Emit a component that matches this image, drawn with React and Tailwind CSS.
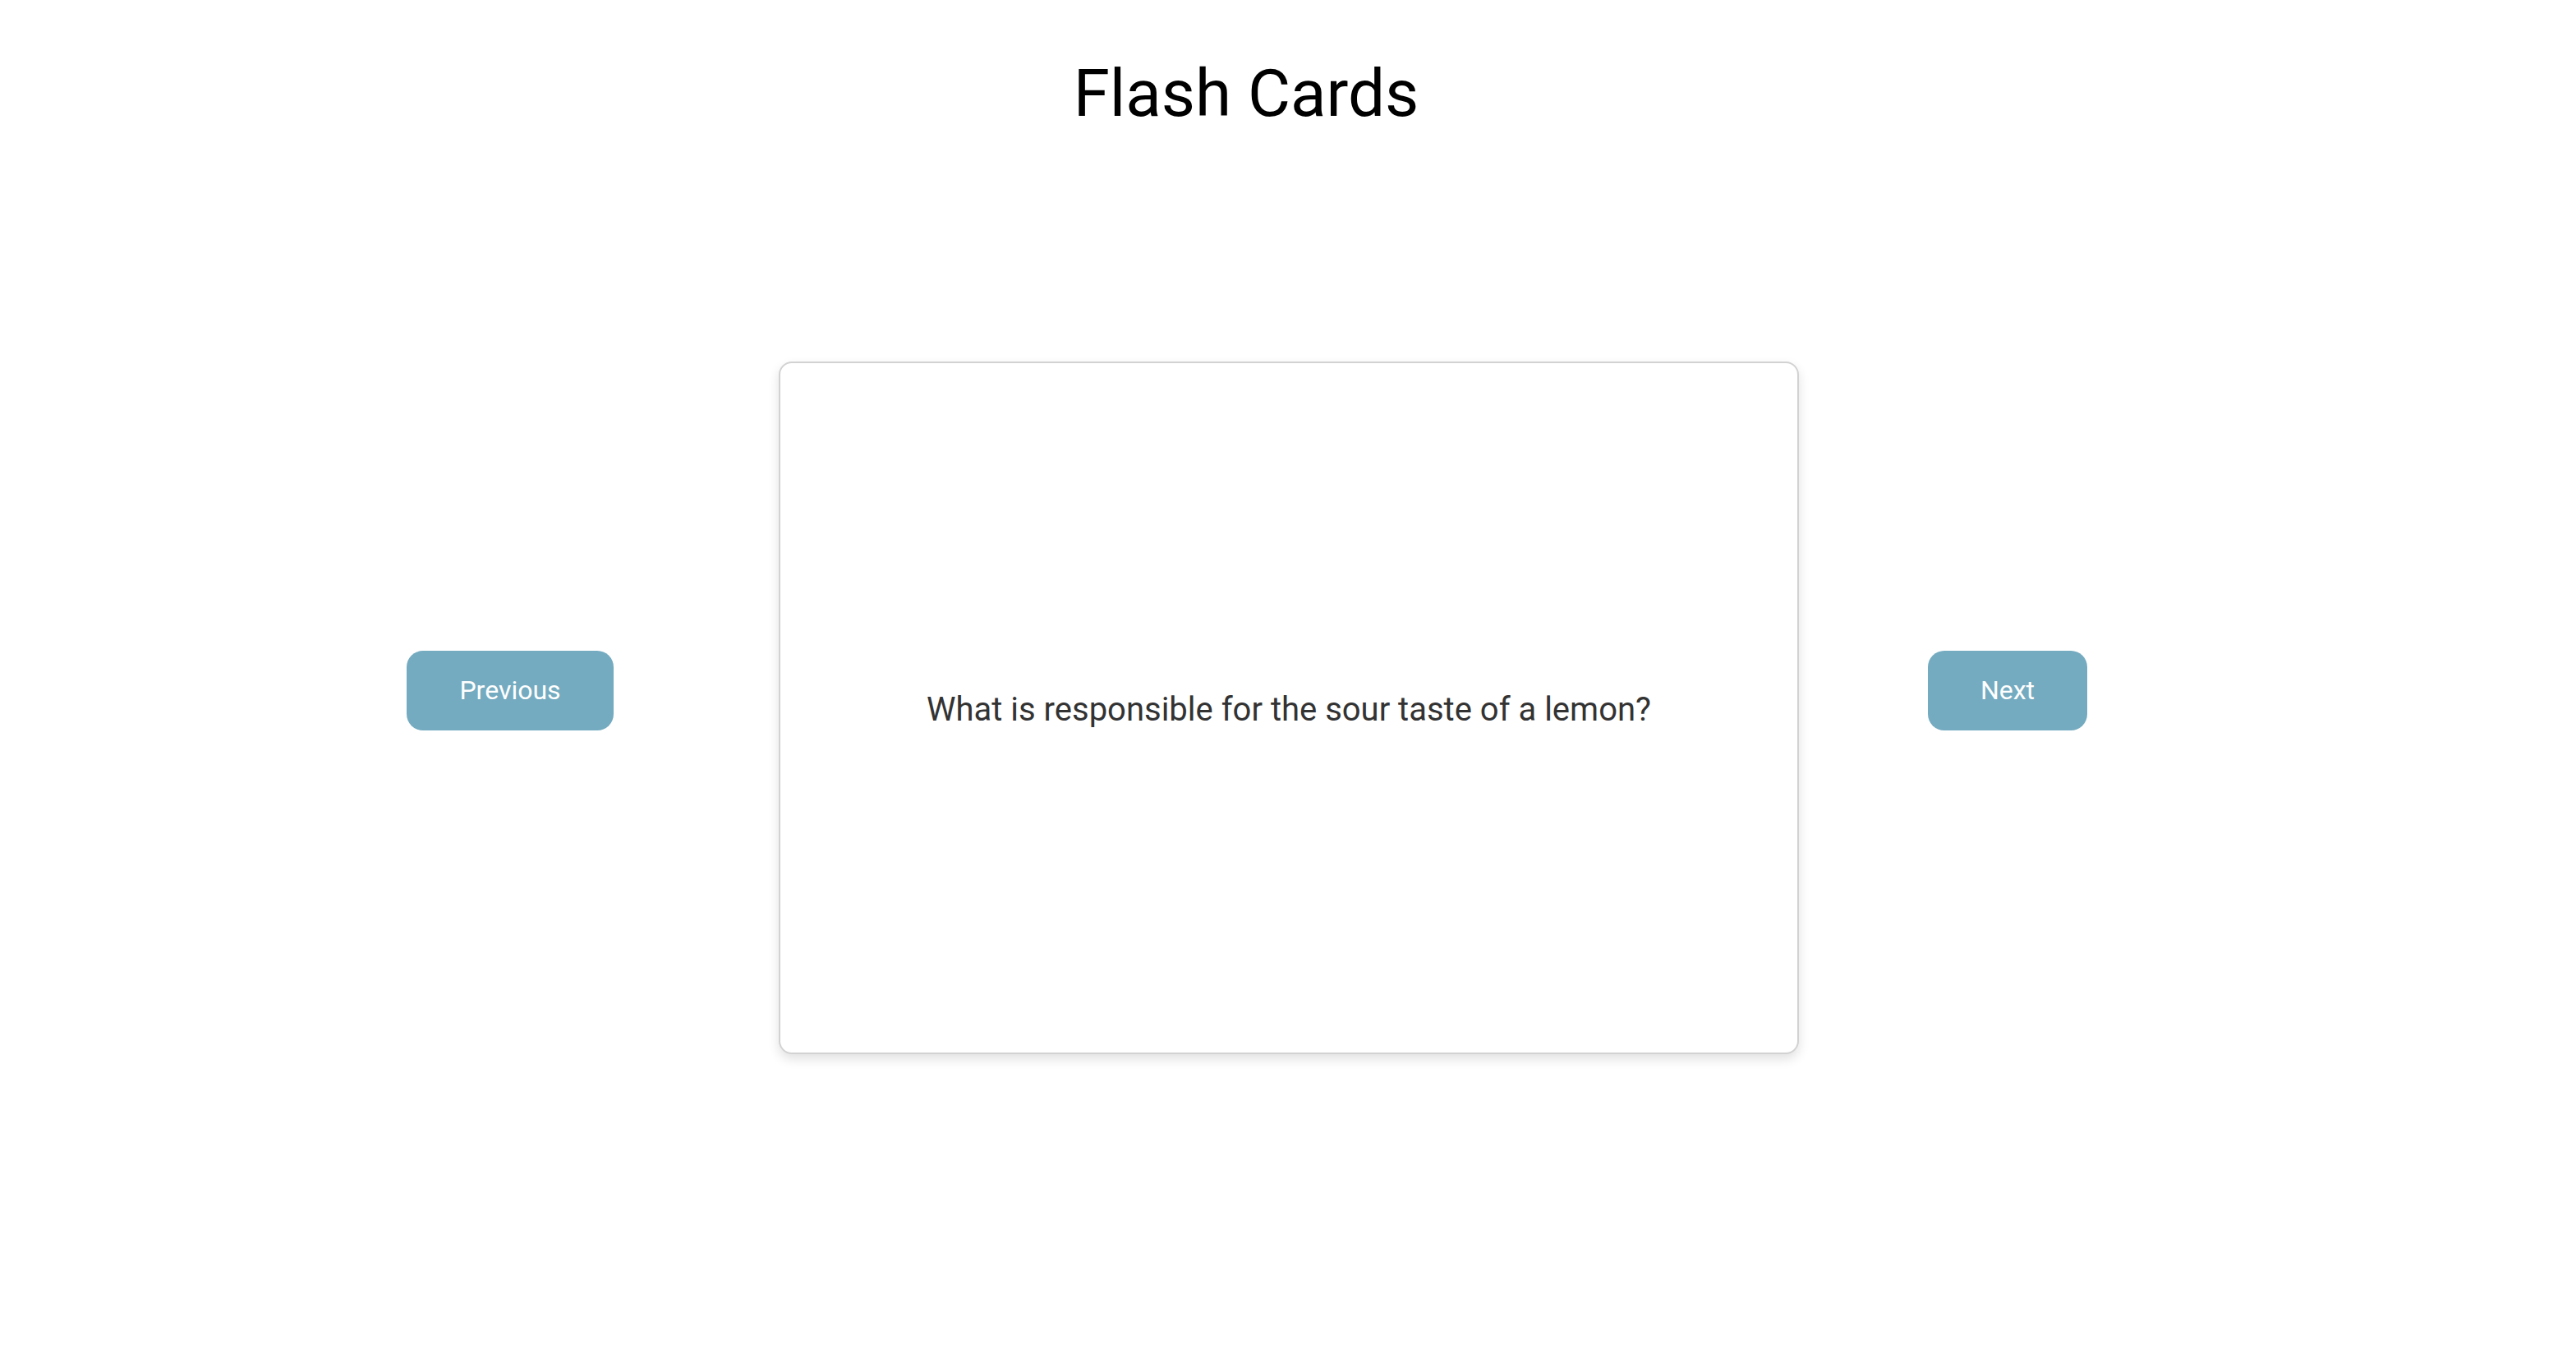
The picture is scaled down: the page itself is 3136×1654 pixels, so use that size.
export default function App() {
  return (
    <div className="min-h-screen bg-white font-['Roboto',sans-serif]">
      <h1 className="pt-[74px] pr-[102px] text-center text-[80px] leading-none font-normal text-black">
        Flash Cards
      </h1>

      <div className="mt-[286px] flex items-center pl-[495px]">
        <button className="mb-[43px] h-[97px] w-[252px] rounded-[20px] bg-[#74abc0] text-[32px] text-white">
          Previous
        </button>

        <div className="ml-[201px] flex h-[843px] w-[1242px] items-center justify-center rounded-[16px] border-2 border-[#d2d2d2] bg-white shadow-[0_6px_14px_rgba(0,0,0,0.12)]">
          <p className="mt-[4px] text-[40px] text-[#333333]">
            What is responsible for the sour taste of a lemon?
          </p>
        </div>

        <button className="ml-[157px] mb-[43px] h-[97px] w-[194px] rounded-[20px] bg-[#74abc0] text-[32px] text-white">
          Next
        </button>
      </div>
    </div>
  );
}
